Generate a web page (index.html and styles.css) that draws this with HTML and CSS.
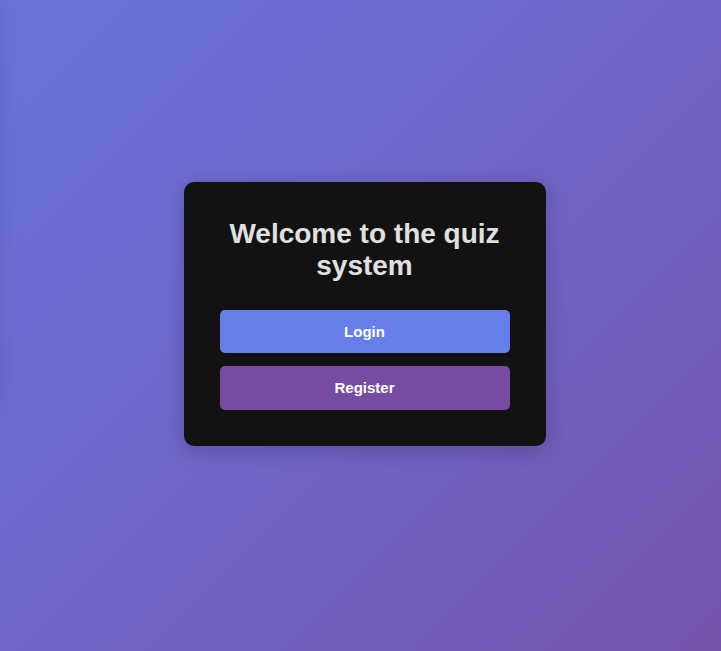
FILE: index.html
```html
<!doctype html>

<html>
  <head>
    <meta http-equiv="Content-Type" content="text/html; charset=utf-8">
    <title>Quiz</title>
    <link rel="stylesheet" href="styles.css">
  </head>
  <body>

    <div class="drawer"></div>

    <div class="card">
      <h1>Welcome to the quiz system</h1>

      <div class="actions">
        <button class="btn login">Login</button>
        <button class="btn register">Register</button>
      </div>
    </div>

  </body>
</html>
```

FILE: styles.css
```css
html, body {
  height: 100%;
}

body {
  background:   linear-gradient(135deg, #6a74dc 0%, #7455ae 100%);
  color:        #e0e0e0;
  font:         16px/1.5 "Liberation Sans", Arial, sans-serif;
  margin:       0;
  padding:      0 0 24px 8px;
  box-sizing:   border-box;
  display:      flex;
  align-items:  center;
  justify-content: center;
  overflow:     hidden;
}

.drawer {
  position: fixed;
  top: 0;
  left: -300px;
  width: 300px;
  height: 410px;
  box-shadow: 0 0 20px rgba(0, 0, 0, 0.1);
}

.card {
  background: #121212;
  border-radius: 10px;
  box-shadow: 0 4px 20px rgba(0, 0, 0, 0.2);
  padding: 36px;
  width: 290px;
}

h1 {
  color: #e0e0e0;
  font-size: 28px;
  font-weight: bold;
  line-height: 32px;
  margin: 0 0 28px;
  text-align: center;
}

.actions {
  display: flex;
  flex-direction: column;
  gap: 13px;
}

.btn {
  border: none;
  border-radius: 5px;
  color: #fff;
  cursor: pointer;
  font: bold 15px/1 "Liberation Sans", Arial, sans-serif;
  height: 43px;
  padding: 0;
}
.login {
  background: #667eea;
}
.register {
  background: #764ba2;
  height: 44px;
}
```
